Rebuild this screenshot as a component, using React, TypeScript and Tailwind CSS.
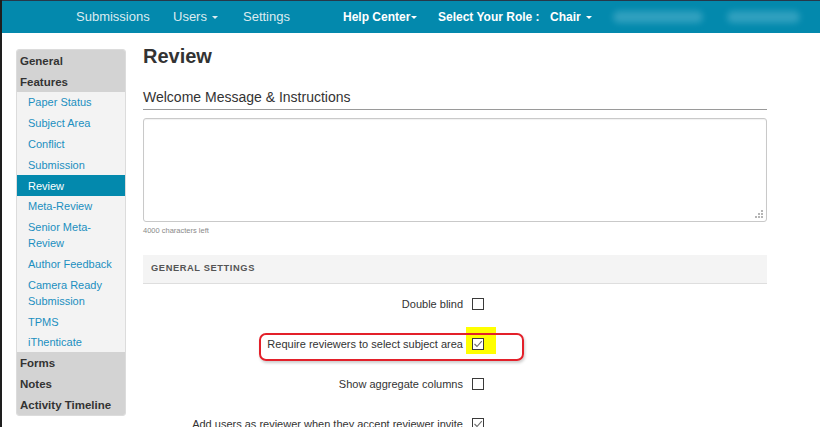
import React from 'react';

const sections = [
  { name: 'General', head: true },
  { name: 'Features', head: true },
  { name: 'Paper Status' },
  { name: 'Subject Area' },
  { name: 'Conflict' },
  { name: 'Submission' },
  { name: 'Review', active: true },
  { name: 'Meta-Review' },
  { name: 'Senior Meta-Review', lines: ['Senior Meta-', 'Review'] },
  { name: 'Author Feedback' },
  { name: 'Camera Ready Submission', lines: ['Camera Ready', 'Submission'] },
  { name: 'TPMS' },
  { name: 'iThenticate' },
  { name: 'Forms', head: true },
  { name: 'Notes', head: true },
  { name: 'Activity Timeline', head: true },
];

function Caret() {
  return <span className="inline-block ml-[5px] align-middle w-0 h-0 border-l-[3px] border-r-[3px] border-t-[3px] border-l-transparent border-r-transparent border-t-current" />;
}

function CheckBox({ checked }: { checked?: boolean }) {
  return (
    <span className="relative block w-[12px] h-[12px] border border-[#3a3a3a] bg-white">
      {checked && (
        <svg className="absolute left-0 top-0" width="10" height="10" viewBox="0 0 10 10">
          <path d="M1.5 5 L4 7.5 L8.8 2.2" fill="none" stroke="#6b6b6b" strokeWidth="1.1" />
        </svg>
      )}
    </span>
  );
}

const settings = [
  { label: 'Double blind', checked: false },
  { label: 'Require reviewers to select subject area', checked: true, marked: true },
  { label: 'Show aggregate columns', checked: false },
  { label: 'Add users as reviewer when they accept reviewer invite', checked: true },
];

export default function App() {
  return (
    <div className="flex h-[427px] w-[820px] overflow-hidden bg-white font-['Liberation_Sans',Arial,sans-serif]">
      {/* strip of the window behind */}
      <div className="w-[2px] shrink-0 bg-[#1e1e1e]" />

      <div className="flex-1 flex flex-col">
        {/* top bar */}
        <nav className="h-[33px] shrink-0 border-t border-[#26384a] bg-[#0389ad] flex items-center pl-[74px] text-[#dcebf0]">
          <div className="w-[97px] shrink-0 text-[13px]">Submissions</div>
          <div className="w-[70px] shrink-0 text-[13px]">Users<Caret /></div>
          <div className="w-[100px] shrink-0 text-[13px]">Settings</div>
          <div className="w-[95px] shrink-0 text-[12px] font-bold text-white">Help Center<span className="inline-block ml-[1px] align-middle w-0 h-0 border-l-[3px] border-r-[3px] border-t-[3px] border-l-transparent border-r-transparent border-t-current" /></div>
          <div className="w-[112px] shrink-0 text-[12px] font-bold text-white">Select Your Role :</div>
          <div className="w-[63px] shrink-0 text-[12px] font-bold text-white">Chair<Caret /></div>
          <div className="w-[114px] shrink-0"><div className="w-[90px] h-[12px] rounded-full bg-[#4fb0cb] blur-[3px] opacity-60" /></div>
          <div className="w-[73px] shrink-0"><div className="w-[73px] h-[12px] rounded-full bg-[#4fb0cb] blur-[3px] opacity-60" /></div>
        </nav>

        <div className="flex">
          {/* side menu */}
          <aside className="ml-[14px] mt-[16px] w-[110px] shrink-0 self-start overflow-hidden rounded-[3px] border border-[#dcdcdc] bg-[#f3f3f3]">
            {sections.map((s) => (
              <div
                key={s.name}
                className={
                  s.head
                    ? 'bg-[#d3d3d3] pl-[3px] pt-[2.8px] pb-[2px] leading-[16px] text-[11.5px] font-bold text-[#333]'
                    : s.active
                    ? 'bg-[#0389ad] pl-[11px] pt-[2.8px] pb-[2px] leading-[16px] text-[11px] text-white'
                    : 'pl-[11px] pt-[2.8px] pb-[2px] leading-[16px] text-[11px] text-[#1b8fc0]'
                }
              >
                {s.lines ? s.lines.map((l) => <div key={l}>{l}</div>) : s.name}
              </div>
            ))}
          </aside>

          {/* page */}
          <main className="ml-[17px] w-[624px] shrink-0 pt-[11px] text-[#333]">
            <h1 className="text-[20px] leading-[24px] font-bold">Review</h1>

            <div className="mt-[20px] border-b border-[#9a9a9a] pb-[3px] text-[14px] leading-[18px]">
              Welcome Message &amp; Instructions
            </div>

            <div className="relative mt-[8px] h-[104px] rounded-[3px] border border-[#c9c9c9] shadow-[inset_0_1px_1px_rgba(0,0,0,0.06)]">
              <svg className="absolute right-[3px] bottom-[3px]" width="8" height="8" viewBox="0 0 8 8">
                <rect x="6" y="0" width="2" height="2" fill="#b5b5b5" />
                <rect x="3" y="3" width="2" height="2" fill="#b5b5b5" />
                <rect x="6" y="3" width="2" height="2" fill="#b5b5b5" />
                <rect x="0" y="6" width="2" height="2" fill="#b5b5b5" />
                <rect x="3" y="6" width="2" height="2" fill="#b5b5b5" />
                <rect x="6" y="6" width="2" height="2" fill="#b5b5b5" />
              </svg>
            </div>
            <div className="mt-[4px] text-[7.5px] leading-[10px] text-[#8a8a8a]">4000 characters left</div>

            <div className="mt-[19px] h-[29px] flex items-center border-b border-[#dedede] bg-[#f4f4f4] pl-[8px] text-[9.3px] font-bold tracking-[0.6px] text-[#555]">
              GENERAL SETTINGS
            </div>

            {settings.map((row) => (
              <div key={row.label} className="relative h-[40px] flex items-center">
                {row.marked && (
                  <>
                    <div className="absolute left-[323px] top-[3px] w-[30px] h-[27px] bg-[#ffff00]" />
                    <div className="absolute left-[116px] top-[9px] w-[265px] h-[28px] rounded-[7px] border-2 border-[#e3202a] shadow-[1px_2px_3px_rgba(0,0,0,0.2)]" />
                  </>
                )}
                <div className="relative w-[320px] shrink-0 text-right text-[11px] text-[#333]">{row.label}</div>
                <div className="relative ml-[9px]"><CheckBox checked={row.checked} /></div>
              </div>
            ))}
          </main>
        </div>
      </div>
    </div>
  );
}
